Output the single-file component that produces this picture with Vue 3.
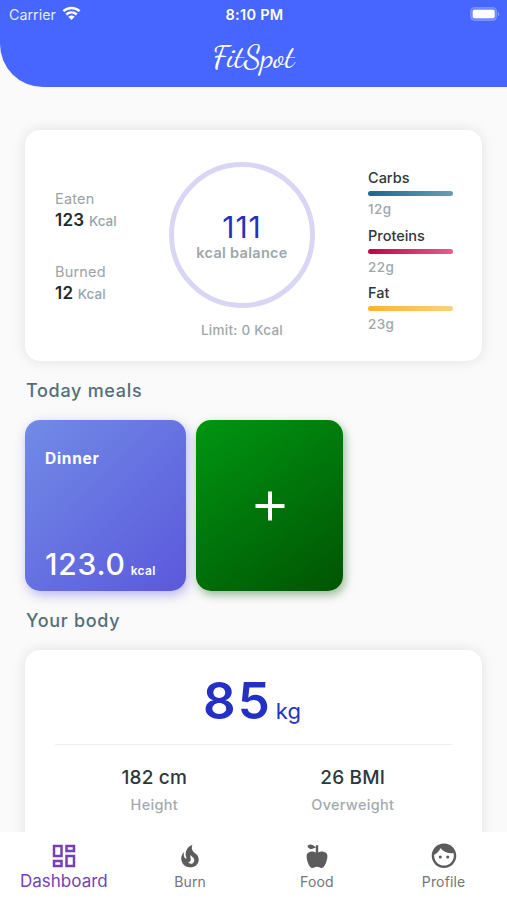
<template>
  <div class="screen">
    <header class="topbar">
      <div class="status">
        <div class="status-left">
          <span class="carrier">Carrier</span>
          <svg class="wifi" width="19" height="15" viewBox="0 0 19 15" fill="none" aria-hidden="true">
            <path d="M1.4 5.2C6 .9 13 .9 17.6 5.2" stroke="currentColor" stroke-width="2.5" />
            <path d="M4.3 8.5C7.3 5.7 11.7 5.7 14.7 8.5" stroke="currentColor" stroke-width="2.4" />
            <path d="M9.5 14L6.3 10.8C8.2 9.1 10.8 9.1 12.7 10.8Z" fill="currentColor" />
          </svg>
        </div>
        <span class="clock">8:10 PM</span>
        <div class="status-right">
          <svg width="30" height="14" viewBox="0 0 30 14" aria-hidden="true">
            <rect x=".6" y=".6" width="26" height="12.8" rx="4" fill="#fff" fill-opacity=".22" stroke="#fff" stroke-opacity=".22" />
            <rect x="2.7" y="2.7" width="22" height="8.6" rx="2" fill="#fff" />
            <path d="M28 4.7c1.5.8 1.5 3.8 0 4.6z" fill="#fff" fill-opacity=".4" />
          </svg>
        </div>
      </div>
      <h1 class="logo">FitSpot</h1>
    </header>

    <main class="content">
      <section class="card summary">
        <div class="intake">
          <div v-for="item in energy" :key="item.label" class="intake-item">
            <div class="intake-label">{{ item.label }}</div>
            <div class="intake-value">{{ item.value }} <small>Kcal</small></div>
          </div>
        </div>

        <div class="balance">
          <div class="ring">
            <span class="ring-value">111</span>
            <span class="ring-label">kcal balance</span>
          </div>
          <div class="limit">Limit: 0 Kcal</div>
        </div>

        <div class="macros">
          <div v-for="m in macros" :key="m.name" class="macro">
            <div class="macro-name">{{ m.name }}</div>
            <div class="macro-bar" :class="m.tone"></div>
            <div class="macro-amount">{{ m.grams }}g</div>
          </div>
        </div>
      </section>

      <h2 class="heading">Today meals</h2>
      <section class="meals">
        <div class="meal">
          <span class="meal-name">Dinner</span>
          <div class="meal-kcal"><span>123.0</span><small>kcal</small></div>
        </div>
        <button class="meal-add" aria-label="Add meal">
          <svg width="30" height="30" viewBox="0 0 30 30" fill="none" aria-hidden="true">
            <path d="M15 .5v29M.5 15h29" stroke="currentColor" stroke-width="4" />
          </svg>
        </button>
      </section>

      <h2 class="heading body-heading">Your body</h2>
      <section class="card body-card">
        <div class="weight"><span>85</span><small>kg</small></div>
        <div class="stats">
          <div v-for="s in stats" :key="s.label" class="stat">
            <div class="stat-value">{{ s.value }}</div>
            <div class="stat-label">{{ s.label }}</div>
          </div>
        </div>
      </section>
    </main>

    <nav class="tabs">
      <button v-for="t in tabs" :key="t.label" class="tab" :class="{ active: active === t.label }" @click="active = t.label">
        <svg width="30" height="30" :viewBox="t.box || '0 0 24 24'" fill="currentColor" aria-hidden="true">
          <path :d="t.icon" />
        </svg>
        <span>{{ t.label }}</span>
      </button>
    </nav>
  </div>
</template>

<script setup>
import { ref } from 'vue'

const active = ref('Dashboard')

const energy = [
  { label: 'Eaten', value: 123 },
  { label: 'Burned', value: 12 },
]

const macros = [
  { name: 'Carbs', grams: 12, tone: 'carbs' },
  { name: 'Proteins', grams: 22, tone: 'proteins' },
  { name: 'Fat', grams: 23, tone: 'fat' },
]

const stats = [
  { value: '182 cm', label: 'Height' },
  { value: '26 BMI', label: 'Overweight' },
]

const tabs = [
  {
    label: 'Dashboard',
    icon: 'M19 5v2h-4V5h4M9 5v6H5V5h4m10 8v6h-4v-6h4M9 17v2H5v-2h4M21 3h-8v6h8V3zM11 3H3v10h8V3zm10 8h-8v10h8V11zm-10 4H3v6h8v-6z',
  },
  {
    label: 'Burn',
    icon: 'M17.66 11.2c-.23-.3-.51-.56-.77-.82-.67-.6-1.43-1.03-2.07-1.66C13.33 7.26 13 4.85 13.95 3c-.95.23-1.78.75-2.49 1.32-2.59 2.08-3.61 5.75-2.39 8.9.04.1.08.2.08.33 0 .22-.15.42-.35.5-.23.1-.47.04-.66-.12a.58.58 0 0 1-.14-.17c-1.13-1.43-1.31-3.48-.55-5.12C5.78 10 4.87 12.3 5 14.47c.06.5.12 1 .29 1.5.14.6.41 1.2.71 1.73 1.08 1.73 2.95 2.97 4.96 3.22 2.14.27 4.43-.12 6.07-1.6 1.83-1.66 2.47-4.32 1.53-6.6l-.13-.26c-.21-.46-.77-1.26-.77-1.26m-3.16 6.3c-.28.24-.74.5-1.1.6-1.12.4-2.24-.16-2.9-.82 1.19-.28 1.9-1.16 2.11-2.05.17-.8-.15-1.46-.28-2.23-.12-.74-.1-1.37.17-2.06.19.38.39.76.63 1.06.77 1 1.98 1.44 2.24 2.8.04.14.06.28.06.43.03.82-.33 1.72-.93 2.27z',
  },
  {
    label: 'Food',
    box: '-.5 -.5 25 25',
    icon: 'M20 10c2 2-1 12-4 12-2 0-2-1-4-1s-2 1-4 1c-3 0-6-10-4-12 2-2 5-2 7-1V5C5.38 8.07 4.11 3.78 4.11 3.78S6.77.19 11 5V3h2v6c2-1 5-1 7 1z',
  },
  {
    label: 'Profile',
    box: '-.2 0 24.4 24.4',
    icon: 'M9 11.75a1.25 1.25 0 1 0 0 2.5 1.25 1.25 0 0 0 0-2.5zm6 0a1.25 1.25 0 1 0 0 2.5 1.25 1.25 0 0 0 0-2.5zM12 2C6.48 2 2 6.48 2 12s4.48 10 10 10 10-4.48 10-10S17.52 2 12 2zm0 18c-4.41 0-8-3.59-8-8 0-.29.02-.58.05-.86 2.36-1.05 4.23-2.98 5.21-5.37C11.07 8.33 14.05 10 17.42 10c.78 0 1.53-.09 2.25-.26.21.71.33 1.47.33 2.26 0 4.41-3.59 8-8 8z',
  },
]
</script>

<style scoped>
.screen {
  display: flex;
  flex-direction: column;
  height: 900px;
  overflow: hidden;
  background: #fafafa;
  font-family: Inter, 'Liberation Sans', sans-serif;
  color: #2c383d;
}

.topbar {
  flex-shrink: 0;
  height: 87px;
  background: #4766ff;
  border-bottom-left-radius: 43px;
  color: #fff;
}

.status {
  display: grid;
  grid-template-columns: 1fr auto 1fr;
  align-items: center;
  height: 28px;
  padding: 0 7px 0 9px;
  font-size: 14.5px;
}

.status-left {
  display: flex;
  align-items: center;
  gap: 6px;
}

.carrier {
  font-size: 14.3px;
  color: rgba(255, 255, 255, 0.88);
}

.wifi { margin-top: -2px; }

.clock {
  font-weight: 600;
  letter-spacing: 0.3px;
}

.status-right {
  display: flex;
  justify-content: flex-end;
}

.logo {
  margin: 0;
  height: 58px;
  line-height: 58px;
  text-align: center;
  font-family: 'Dancing Script', cursive;
  font-size: 32px;
  font-weight: 400;
}

.content {
  flex: 1;
  min-height: 0;
  overflow: hidden;
  padding: 43px 25px 0;
}

.card {
  background: #fff;
  border-radius: 15px;
  box-shadow: 0 0 14px rgba(0, 0, 0, 0.1);
}

.summary {
  display: grid;
  grid-template-columns: 114px 146px 1fr;
  height: 231px;
  box-sizing: border-box;
  padding: 32px 30px 0;
}

.intake { padding-top: 27px; }

.intake-item {
  height: 73px;
  color: #9aa4a8;
}

.intake-label {
  font-size: 14.5px;
  line-height: 20px;
  letter-spacing: 0.2px;
}

.intake-value {
  font-size: 17px;
  line-height: 22px;
  font-weight: 600;
  letter-spacing: 0.25px;
  color: #212b2f;
}

.intake-value small {
  font-size: 13.5px;
  font-weight: 500;
  letter-spacing: 0;
  color: #9aa4a8;
}

.balance { text-align: center; }

.ring {
  display: flex;
  flex-direction: column;
  align-items: center;
  width: 146px;
  height: 146px;
  box-sizing: border-box;
  border: 5px solid #d8d6f4;
  border-radius: 50%;
  padding-top: 43px;
}

.ring-value {
  font-size: 30px;
  line-height: 34px;
  letter-spacing: 1px;
  color: #2430c4;
}

.ring-label {
  font-size: 14.5px;
  line-height: 18px;
  font-weight: 600;
  letter-spacing: 0.3px;
  white-space: nowrap;
  color: #9ea7aa;
}

.limit {
  margin-top: 12px;
  font-size: 13.5px;
  line-height: 20px;
  font-weight: 500;
  letter-spacing: 0.25px;
  color: #9ea7aa;
}

.macros {
  padding: 6px 0 0 53px;
}

.macro { height: 57.5px; }

.macro-name {
  font-size: 14.5px;
  line-height: 19px;
  font-weight: 500;
}

.macro-bar {
  width: 85px;
  height: 5px;
  margin-top: 4px;
  border-radius: 3px;
}

.macro-bar.carbs { background: linear-gradient(90deg, #19698c, #64a0b6); }
.macro-bar.proteins { background: linear-gradient(90deg, #be0645, #e0608a); }
.macro-bar.fat { background: linear-gradient(90deg, #f7b52d, #fad27b); }

.macro-amount {
  margin-top: 5px;
  font-size: 13.5px;
  line-height: 17px;
  font-weight: 500;
  letter-spacing: 0.4px;
  color: #9ea7aa;
}

.heading {
  margin: 18px 0 0;
  padding-left: 1px;
  font-size: 18px;
  line-height: 24px;
  font-weight: 500;
  letter-spacing: 0.7px;
  color: #546e7a;
}

.meals {
  display: flex;
  gap: 10px;
  margin-top: 17px;
}

.meal {
  display: flex;
  flex-direction: column;
  justify-content: space-between;
  width: 161px;
  height: 171px;
  box-sizing: border-box;
  padding: 29px 20px 8px;
  border-radius: 15px;
  background: linear-gradient(135deg, #718be6, #5b58dc);
  box-shadow: 2px 4px 12px rgba(91, 88, 220, 0.42);
  color: #fff;
}

.meal-name {
  font-size: 15.5px;
  line-height: 20px;
  font-weight: 700;
  letter-spacing: 0.7px;
}

.meal-kcal {
  display: flex;
  align-items: baseline;
  gap: 5px;
  font-size: 30px;
  line-height: 38px;
  font-weight: 500;
  letter-spacing: 0.8px;
  white-space: nowrap;
}

.meal-kcal small {
  font-size: 12px;
  line-height: 16px;
  font-weight: 600;
  letter-spacing: 0.3px;
}

.meal-add {
  display: flex;
  align-items: center;
  justify-content: center;
  width: 147px;
  height: 171px;
  padding: 0;
  border: 0;
  border-radius: 15px;
  background: linear-gradient(145deg, #009612, #005402);
  box-shadow: 2px 4px 10px rgba(0, 84, 2, 0.4);
  color: #fff;
}

.body-heading { margin-top: 18px; }

.body-card {
  height: 230px;
  box-sizing: border-box;
  margin-top: 17px;
  padding: 18px 30px 0;
}

.weight {
  display: flex;
  align-items: baseline;
  justify-content: center;
  gap: 4px;
  height: 76px;
  padding-right: 3px;
  line-height: 66px;
  border-bottom: 1px solid #eeeff0;
  font-size: 51px;
  font-weight: 600;
  letter-spacing: 2px;
  color: #2430c4;
}

.weight small {
  font-size: 22px;
  line-height: 28px;
  font-weight: 400;
  letter-spacing: 0;
}

.stats {
  display: grid;
  grid-template-columns: 1fr 1fr;
  padding-top: 21px;
  text-align: center;
}

.stat-value {
  font-size: 19px;
  line-height: 24px;
  font-weight: 500;
  letter-spacing: 0.2px;
}

.stat-label {
  margin-top: 6px;
  font-size: 14.5px;
  line-height: 18px;
  font-weight: 500;
  letter-spacing: 0.3px;
  color: #a3abae;
}

.tabs {
  display: grid;
  grid-template-columns: repeat(4, 1fr);
  flex-shrink: 0;
  height: 68px;
  background: #fff;
}

.tab {
  display: flex;
  flex-direction: column;
  align-items: center;
  padding: 9px 0 0;
  border: 0;
  background: transparent;
  font-family: inherit;
  font-size: 14px;
  line-height: 18px;
  letter-spacing: 0.15px;
  color: #757575;
}

.tab svg {
  flex-shrink: 0;
  color: #5c5c5c;
}

.tab span { margin-top: 2px; }

.tab.active,
.tab.active svg {
  color: #7540b8;
}

.tab.active {
  padding-left: 1px;
  font-size: 17px;
  letter-spacing: 0;
}

.tab.active span { margin-top: 1px; }
</style>

<style>
body {
  margin: 0;
}
</style>
